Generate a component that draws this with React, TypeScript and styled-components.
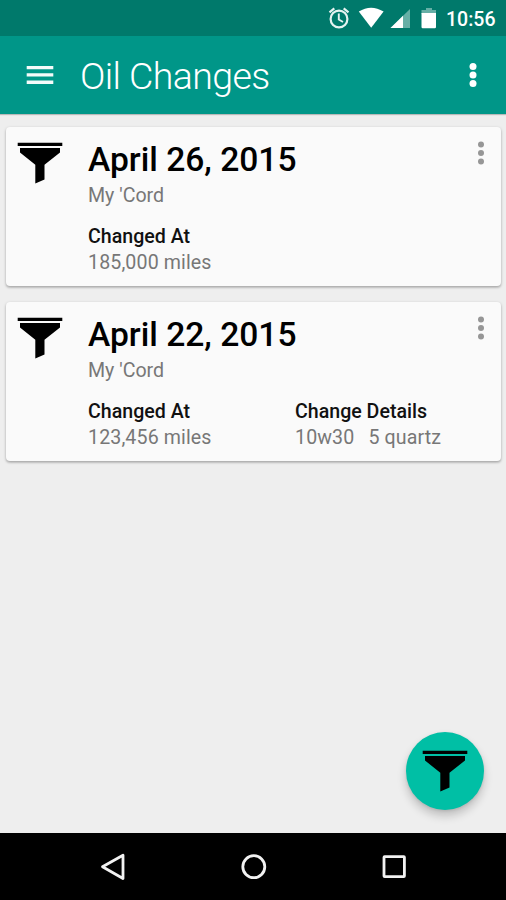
import React from "react";
import styled, { createGlobalStyle } from "styled-components";

const GlobalStyle = createGlobalStyle`
  * { box-sizing: border-box; }
  html, body { margin: 0; padding: 0; background: #eeeeee; }
  body { font-family: Roboto, "Noto Sans", sans-serif; overflow: hidden; }
`;

const Screen = styled.div`
  position: relative;
  display: flex;
  flex-direction: column;
  width: 506px;
  height: 900px;
  background: #eeeeee;
`;

const StatusBar = styled.header`
  display: flex;
  align-items: center;
  justify-content: flex-end;
  flex: none;
  height: 36px;
  padding-right: 11px;
  background: #00796b;
  color: #fff;
`;

const StatusIcons = styled.svg`
  display: block;
  width: 116px;
  height: 36px;
  margin-right: 6px;
`;

const Clock = styled.span`
  width: 49px;
  font-size: 19.5px;
  font-weight: 500;
  line-height: 36px;
  padding-top: 3px;
  white-space: nowrap;
`;

const AppBar = styled.div`
  display: flex;
  align-items: center;
  flex: none;
  height: 78px;
  padding: 0 29px 0 26px;
  background: #009688;
  box-shadow: 0 1px 1px rgba(0, 0, 0, 0.22);
`;

const MenuIcon = styled.svg`
  display: block;
  width: 28px;
  height: 20px;
  margin-right: 26px;
`;

const Title = styled.h1`
  flex: 1;
  margin: 0;
  padding-top: 1px;
  color: #fff;
  font-size: 37.5px;
  font-weight: 300;
  letter-spacing: -0.6px;
  line-height: 44px;
  white-space: nowrap;
`;

const DotsIcon = styled.svg`
  display: block;
  flex: none;
  width: 8px;
  height: 26px;
`;

const CardList = styled.main`
  display: flex;
  flex: 1;
  flex-direction: column;
  gap: 16px;
  padding: 13px 5px 0 6px;
`;

const Card = styled.article`
  display: flex;
  height: 159px;
  padding: 15px 16px 0 11px;
  border-radius: 4px;
  background: #fafafa;
  box-shadow: 0 1px 3px rgba(0, 0, 0, 0.26), 0 2px 2px rgba(0, 0, 0, 0.1);
`;

const CardMenu = styled.div`
  flex: none;
  margin-top: -2px;
`;

const Funnel = styled.svg`
  display: block;
  flex: none;
  width: 46px;
  height: 42px;
`;

const CardBody = styled.div`
  flex: 1;
  padding-left: 25px;
`;

const DateHeading = styled.h2`
  margin: -2px 0 0;
  color: #000;
  font-size: 33.6px;
  font-weight: 500;
  line-height: 40px;
  white-space: nowrap;
`;

const Vehicle = styled.div`
  margin-top: 4px;
  color: #777;
  font-size: 19.6px;
  line-height: 24px;
`;

const Details = styled.div`
  display: grid;
  grid-template-columns: 207px 1fr;
  margin-top: 16px;
`;

const Label = styled.div`
  color: #111;
  font-size: 19.6px;
  font-weight: 500;
  line-height: 26px;
  white-space: nowrap;
`;

const Value = styled.div`
  display: flex;
  gap: 14px;
  color: #777;
  font-size: 19.6px;
  letter-spacing: 0.12px;
  line-height: 26px;
  white-space: nowrap;
`;

const Fab = styled.button`
  position: absolute;
  right: 22px;
  bottom: 90px;
  display: flex;
  justify-content: center;
  width: 78px;
  height: 78px;
  padding: 18px 0 0;
  border: 0;
  border-radius: 50%;
  background: #00bfa5;
  box-shadow: 0 6px 10px rgba(0, 0, 0, 0.2), 0 1px 3px rgba(0, 0, 0, 0.1);
`;

const NavBar = styled.nav`
  display: flex;
  align-items: flex-start;
  justify-content: space-between;
  flex: none;
  height: 67px;
  padding: 19px 98px 0 99px;
  background: #000;
`;

const NavIcon = styled.svg`
  display: block;
  width: 28px;
  height: 28px;
  fill: none;
  stroke: #f2f2f2;
  stroke-width: 2.8;
  stroke-linejoin: round;
`;

function FunnelIcon() {
  return (
    <Funnel viewBox="0 0 46 42">
      <path d="M.7 .7H45.3V4H.7zM3 6H43V10.5L27.5 22.7V37.6L18.3 41.4V22.7L3 10.5z" fill="#000" />
    </Funnel>
  );
}

function Dots({ color, radius }: { color: string; radius: number }) {
  return (
    <DotsIcon viewBox="0 0 8 26" fill={color}>
      <circle cx="4" cy="4.6" r={radius} />
      <circle cx="4" cy="13" r={radius} />
      <circle cx="4" cy="21.4" r={radius} />
    </DotsIcon>
  );
}

type Field = { label: string; values: string[] };
type OilChange = { date: string; vehicle: string; fields: Field[] };

const changes: OilChange[] = [
  {
    date: "April 26, 2015",
    vehicle: "My 'Cord",
    fields: [{ label: "Changed At", values: ["185,000 miles"] }],
  },
  {
    date: "April 22, 2015",
    vehicle: "My 'Cord",
    fields: [
      { label: "Changed At", values: ["123,456 miles"] },
      { label: "Change Details", values: ["10w30", "5 quartz"] },
    ],
  },
];

export default function App() {
  return (
    <Screen>
      <GlobalStyle />
      <StatusBar>
        <StatusIcons viewBox="324 0 116 36">
          <g fill="none" stroke="#e6f3f1" strokeWidth="2.2">
            <circle cx="339" cy="19" r="8.4" />
            <path d="M338.8 13.5V19.5L343 22" strokeWidth="1.9" />
            <path d="M329.5 12.3L334.3 8.4M348.5 12.3L343.7 8.4" />
          </g>
          <path d="M358.8 11.6Q371 3.8 383.6 11.6L371.2 27.8z" fill="#fff" />
          <path d="M410 9V28H390.5z" fill="#66afa6" />
          <path d="M403 15.8V28H390.5z" fill="#fff" />
          <path d="M426 8H432V10H436V14H421.5V10H426z" fill="#66afa6" />
          <path d="M421.5 13H436V27Q436 28.2 434.8 28.2H422.7Q421.5 28.2 421.5 27z" fill="#fff" />
        </StatusIcons>
        <Clock>10:56</Clock>
      </StatusBar>
      <AppBar>
        <MenuIcon viewBox="0 0 28 20">
          <path d="M.7 .9H27.3V4.3H.7zM.7 8.2H27.3V11.6H.7zM.7 15.5H27.3V18.9H.7z" fill="#f4fbfa" />
        </MenuIcon>
        <Title>Oil Changes</Title>
        <Dots color="#fff" radius={3.5} />
      </AppBar>
      <CardList>
        {changes.map((change) => (
          <Card key={change.date}>
            <FunnelIcon />
            <CardBody>
              <DateHeading>{change.date}</DateHeading>
              <Vehicle>{change.vehicle}</Vehicle>
              <Details>
                {change.fields.map((field) => (
                  <div key={field.label}>
                    <Label>{field.label}</Label>
                    <Value>
                      {field.values.map((value) => (
                        <span key={value}>{value}</span>
                      ))}
                    </Value>
                  </div>
                ))}
              </Details>
            </CardBody>
            <CardMenu>
              <Dots color="#969696" radius={3} />
            </CardMenu>
          </Card>
        ))}
      </CardList>
      <Fab aria-label="Add oil change">
        <FunnelIcon />
      </Fab>
      <NavBar>
        <NavIcon viewBox="0 0 28 28">
          <path d="M24 3.2V26.5L3.5 14.8z" />
        </NavIcon>
        <NavIcon viewBox="0 0 28 28">
          <circle cx="13.8" cy="14.7" r="11" />
        </NavIcon>
        <NavIcon viewBox="0 0 28 28">
          <rect x="4" y="4.7" width="20.4" height="20" rx="0.6" />
        </NavIcon>
      </NavBar>
    </Screen>
  );
}
